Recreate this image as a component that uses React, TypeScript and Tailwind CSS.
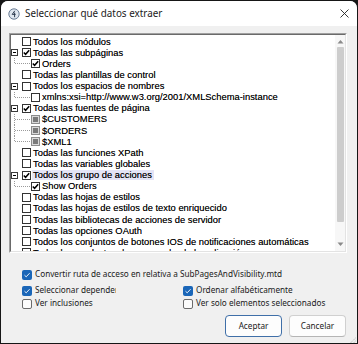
import React from "react";

type Check = "on" | "off" | "gray";
type Row = {
  level: number;
  text: string;
  check: Check;
  expand?: boolean;
  line?: "mid" | "last";
  hl?: boolean;
};

const rows: Row[] = [
  { level: 0, text: "Todos los módulos", check: "off" },
  { level: 0, text: "Todas las subpáginas", check: "on", expand: true },
  { level: 1, text: "Orders", check: "on", line: "last" },
  { level: 0, text: "Todas las plantillas de control", check: "off" },
  { level: 0, text: "Todos los espacios de nombres", check: "off", expand: true },
  { level: 1, text: "xmlns:xsi=http://www.w3.org/2001/XMLSchema-instance", check: "off", line: "last" },
  { level: 0, text: "Todas las fuentes de página", check: "on", expand: true },
  { level: 1, text: "$CUSTOMERS", check: "gray", line: "mid" },
  { level: 1, text: "$ORDERS", check: "gray", line: "mid" },
  { level: 1, text: "$XML1", check: "gray", line: "last" },
  { level: 0, text: "Todas las funciones XPath", check: "off" },
  { level: 0, text: "Todas las variables globales", check: "off" },
  { level: 0, text: "Todos los grupo de acciones", check: "on", expand: true, hl: true },
  { level: 1, text: "Show Orders", check: "on", line: "last" },
  { level: 0, text: "Todas las hojas de estilos", check: "off" },
  { level: 0, text: "Todas las hojas de estilos de texto enriquecido", check: "off" },
  { level: 0, text: "Todas las bibliotecas de acciones de servidor", check: "off" },
  { level: 0, text: "Todas las opciones OAuth", check: "off" },
  { level: 0, text: "Todos los conjuntos de botones IOS de notificaciones automáticas", check: "off" },
  { level: 0, text: "Todos los productos de compra desde la aplicación", check: "off" },
];

function TreeCheck({ state }: { state: Check }) {
  if (state === "gray") {
    return (
      <span className="flex h-[9px] w-[9px] shrink-0 items-center justify-center border border-[#8c8c8c] bg-[#d9d9d9]">
        <span className="h-[5px] w-[5px] bg-[#7a7a7a]" />
      </span>
    );
  }
  return (
    <span className="flex h-[9px] w-[9px] shrink-0 items-center justify-center border border-[#333333] bg-white">
      {state === "on" && (
        <svg width="7" height="7" viewBox="0 0 7 7">
          <path d="M0.8 3.4 L2.6 5.3 L6.2 1.2" fill="none" stroke="#000" strokeWidth="1.5" />
        </svg>
      )}
    </span>
  );
}

function ExpandBox() {
  return (
    <span className="flex h-[7px] w-[7px] items-center justify-center border border-[#3c3c3c] bg-white">
      <span className="h-[1px] w-[3px] bg-black" />
    </span>
  );
}

function TreeRow({ r }: { r: Row }) {
  return (
    <div className="relative flex h-[11.13px] items-center whitespace-nowrap">
      <span className="flex w-[11px] shrink-0 items-center">{r.expand && <ExpandBox />}</span>
      {r.level === 1 && (
        <>
          <span
            className={`absolute left-[3px] top-0 w-0 border-l border-dotted border-[#9a9a9a] ${
              r.line === "mid" ? "h-[11.13px]" : "h-[5px]"
            }`}
          />
          <span className="absolute left-[4px] top-[5px] h-0 w-[15px] border-t border-dotted border-[#9a9a9a]" />
        </>
      )}
      <span className={r.level === 1 ? "w-[9px] shrink-0" : "w-0 shrink-0"} />
      <TreeCheck state={r.check} />
      <span
        className={`ml-[1px] pl-[1px] pr-[2px] text-[9.4px] leading-[10px] text-black [text-shadow:0_0_0.4px_rgba(0,0,0,0.55)] ${
          r.hl ? "bg-[#e4e4f6]" : ""
        }`}
        style={{ fontFamily: '"Liberation Sans", Arial, sans-serif' }}
      >
        {r.text}
      </span>
    </div>
  );
}

function WinCheck({ on }: { on: boolean }) {
  return on ? (
    <span className="flex h-[10px] w-[10px] shrink-0 items-center justify-center rounded-[2px] bg-[#1a66b8]">
      <svg width="8" height="8" viewBox="0 0 8 8">
        <path d="M1.5 4.2 L3.2 5.8 L6.6 2.2" fill="none" stroke="#fff" strokeWidth="0.9" />
      </svg>
    </span>
  ) : (
    <span className="h-[10px] w-[10px] shrink-0 rounded-[2px] border border-[#6b6b6b] bg-[#fbfbfb]" />
  );
}

const ui = { fontFamily: '"Noto Sans", "Open Sans", sans-serif' };

export default function App() {
  return (
    <div className="h-[344px] w-[358px] bg-[#161616] p-[1px]">
      <div className="flex h-[342px] w-[356px] flex-col overflow-hidden rounded-t-[7px] bg-[#f0f0f0]">
        {/* title bar */}
        <div className="flex h-[25px] shrink-0 items-center bg-white pl-[7px] pr-[8px]" style={ui}>
          <svg width="12" height="12" viewBox="0 0 12 12" className="shrink-0">
            <circle cx="6" cy="6" r="5.2" fill="#dfe6ef" stroke="#5b6f8a" strokeWidth="0.9" />
            <path d="M6.8 2.8 L4.2 6.4 H7.6 M6.6 4.6 V9.2" fill="none" stroke="#2d3b4f" strokeWidth="1" />
          </svg>
          <span className="ml-[5px] text-[9.9px] text-[#1a1a1a]">Seleccionar qué datos extraer</span>
          <span className="ml-auto">
            <svg width="9" height="9" viewBox="0 0 9 9">
              <path d="M0.5 0.5 L8.5 8.5 M8.5 0.5 L0.5 8.5" stroke="#222" strokeWidth="0.9" />
            </svg>
          </span>
        </div>

        {/* list box */}
        <div className="ml-[8px] mt-[7px] h-[220px] w-[338px] border-l border-t border-r border-b border-l-[#a0a0a0] border-t-[#a0a0a0] border-r-white border-b-white">
          <div className="flex h-full w-full overflow-hidden border border-l-[#6a6a6a] border-t-[#6a6a6a] border-r-[#e3e3e3] border-b-[#e3e3e3] bg-white">
            <div className="flex-1 overflow-hidden pt-[1px]">
              {rows.map((r, i) => (
                <TreeRow key={i} r={r} />
              ))}
            </div>
            {/* scrollbar */}
            <div className="flex w-[10px] shrink-0 flex-col items-center bg-[#f7f7f7] py-[4px]">
              <svg width="7" height="5" viewBox="0 0 7 5">
                <path d="M0.5 4.5 L3.5 1 L6.5 4.5 Z" fill="#8a8a8a" />
              </svg>
              <div className="mt-[3px] h-[175px] w-[7px] rounded-[1px] bg-[#cdcdcd]" />
              <div className="flex-1" />
              <svg width="7" height="5" viewBox="0 0 7 5">
                <path d="M0.5 0.5 L3.5 4 L6.5 0.5 Z" fill="#8a8a8a" />
              </svg>
            </div>
          </div>
        </div>

        {/* options */}
        <div className="mt-[16px] pl-[21px] text-[8.2px] text-[#1a1a1a]" style={ui}>
          <div className="flex h-[11px] items-center gap-[3px]">
            <WinCheck on />
            <span>Convertir ruta de acceso en relativa a SubPagesAndVisibility.mtd</span>
          </div>
          <div className="mt-[5px] grid grid-cols-[161px_1fr]">
            <div className="flex h-[11px] items-center gap-[3px]">
              <WinCheck on />
              <span className="w-[81px] overflow-hidden whitespace-nowrap">Seleccionar dependencias</span>
            </div>
            <div className="flex h-[11px] items-center gap-[3px]">
              <WinCheck on />
              <span>Ordenar alfabéticamente</span>
            </div>
            <div className="mt-[2px] flex h-[11px] items-center gap-[3px]">
              <WinCheck on={false} />
              <span>Ver inclusiones</span>
            </div>
            <div className="mt-[2px] flex h-[11px] items-center gap-[3px]">
              <WinCheck on={false} />
              <span>Ver solo elementos seleccionados</span>
            </div>
          </div>
        </div>

        {/* buttons */}
        <div className="mt-[6px] flex justify-end gap-[7px] pr-[11px]" style={ui}>
          <button className="h-[22px] w-[57px] rounded-[4px] border border-[#3f6fa8] bg-[#fdfdfd] text-[8.2px] text-[#1a1a1a]">
            Aceptar
          </button>
          <button className="h-[22px] w-[57px] rounded-[4px] border border-[#d0d0d0] border-b-[#b5b5b5] bg-[#fdfdfd] text-[8.2px] text-[#1a1a1a]">
            Cancelar
          </button>
        </div>

        {/* resize grip */}
        <div className="mt-auto flex justify-end pb-[1px] pr-[1px]">
          <svg width="8" height="8" viewBox="0 0 8 8">
            <path d="M7.5 1 L1 7.5 M7.5 4 L4 7.5" stroke="#9a9a9a" strokeWidth="0.8" strokeDasharray="1 1" />
          </svg>
        </div>
      </div>
    </div>
  );
}
